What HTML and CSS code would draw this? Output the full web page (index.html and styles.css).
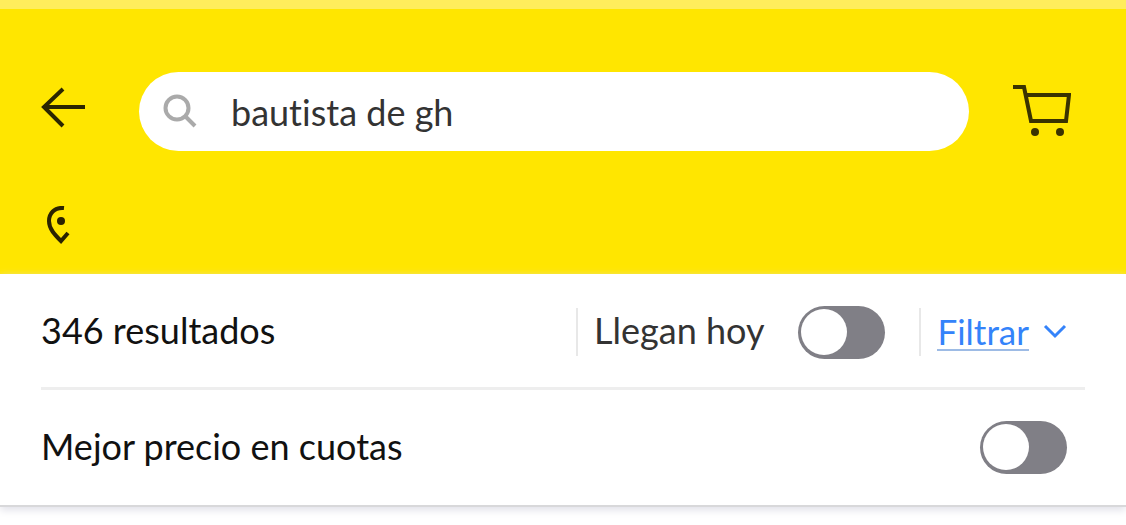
FILE: index.html
```html
<!DOCTYPE html>
<html lang="es">
<head>
    <meta charset="UTF-8">
    <meta name="viewport" content="width=device-width, initial-scale=1.0">
    <title>bautista de gh</title>
    <link rel="stylesheet" href="styles.css">
</head>
<body>

    <!-- Header -->
    <header class="header">
        <div class="search-bar">
            <button class="icon-button" type="button" aria-label="Volver">
                <svg width="46" height="50" viewBox="0 0 46 50" fill="none" stroke="#2b2600" stroke-width="4">
                    <path d="M23 2 4 20l19 19M4 20h41"/>
                </svg>
            </button>
            <form class="search" role="search">
                <svg width="34" height="36" viewBox="0 0 34 36" fill="none" stroke="#aaa" stroke-width="4">
                    <circle cx="14" cy="14" r="11.500"/>
                    <path d="M22 22 32 32"/>
                </svg>
                <input class="search-input" type="text" value="bautista de gh" aria-label="Buscar">
            </form>
            <button class="icon-button" type="button" aria-label="Carrito">
                <svg width="58" height="54" viewBox="0 0 58 54" fill="none" stroke="#3a3300" stroke-width="4">
                    <path d="M0 2h11l7 34h35l3-26H13"/>
                    <circle cx="22" cy="47" r="4" fill="#3a3300" stroke="none"/>
                    <circle cx="47" cy="47" r="4" fill="#3a3300" stroke="none"/>
                </svg>
            </button>
        </div>
        <div class="location">
            <svg width="26" height="38" viewBox="0 0 26 38" fill="none" stroke="#2b2300" stroke-width="4">
                <path d="M18 2C8 1 3 8 3 15c0 8 6 14 12 20l7-8"/>
                <circle cx="15" cy="15" r="4" fill="#2b2300" stroke="none"/>
            </svg>
        </div>
    </header>

    <!-- Filters -->
    <main class="filters">
        <div class="row row-results">
            <h1 class="title">346 resultados</h1>
            <div class="group">
                <label class="soft" for="today">Llegan hoy</label>
                <input class="switch" type="checkbox" role="switch" id="today">
            </div>
            <div class="group group-filter">
                <a class="filter-link" href="#">Filtrar</a>
                <svg width="24" height="16" viewBox="0 0 24 16" fill="none" stroke="#3483fa" stroke-width="3">
                    <path d="m2 2 10 10L22 2"/>
                </svg>
            </div>
        </div>
        <div class="row row-price">
            <label for="price">Mejor precio en cuotas</label>
            <input class="switch" type="checkbox" role="switch" id="price">
        </div>
    </main>

</body>
</html>
```
FILE: styles.css
```css
body {
    min-height: 100vh;
    margin: 0;
    background-color: #fff;
    color: #111;
    font-family: Lato, "Open Sans", sans-serif;
    font-size: 36px;
    font-variant-ligatures: none;
    line-height: 48px;
}
.header {
    background-color: #ffe600;
    border-top: 9px solid #ffed5c;
    padding: 63px 55px 30px 40px;
}
.search-bar {
    display: flex;
    align-items: center;
}
.icon-button {
    display: flex;
    padding: 0;
    border: 0;
    background: none;
    cursor: pointer;
}
.search {
    display: flex;
    flex: 1;
    align-items: center;
    gap: 34px;
    height: 79px;
    box-sizing: border-box;
    margin: 0 44px 0 53px;
    padding: 0 24px;
    border-radius: 40px;
    background-color: #fff;
}
.search-input {
    flex: 1;
    min-width: 0;
    padding: 0;
    border: 0;
    outline: 0;
    background: none;
    color: #333;
    font: inherit;
    font-variant-ligatures: none;
}
.location {
    display: flex;
    padding: 55px 0 0 6px;
}
.filters {
    border-bottom: 2px solid #d8d8da;
    box-shadow: 0 3px 8px #e0e0e8;
}
.row {
    display: flex;
    align-items: center;
    justify-content: space-between;
    height: 115px;
    margin: 0 41px;
    padding-right: 18px;
}
.row label,
.title {
    padding-bottom: 4px;
}
.row-results {
    height: 110px;
    padding-top: 3px;
    border-bottom: 3px solid #eee;
}
.title {
    flex: 1;
    margin: 0;
    font-size: 36px;
    font-weight: 400;
}
.group {
    display: flex;
    align-items: center;
    gap: 34px;
    height: 48px;
    margin-right: 34px;
    padding-left: 16px;
    border-left: 2px solid #e8e8e8;
}
.group-filter {
    gap: 14px;
    margin-right: 0;
}
.soft {
    color: #333;
}
.filter-link {
    border-bottom: 2px solid #9dbbe5;
    color: #3483fa;
    font-size: 35px;
    line-height: 36px;
    text-decoration: none;
}
.switch {
    appearance: none;
    width: 87px;
    height: 53px;
    margin: 0;
    border-radius: 27px;
    background: #807f86;
    cursor: pointer;
}
.switch::before {
    content: "";
    display: block;
    width: 46px;
    height: 46px;
    margin: 3px;
    border-radius: 50%;
    background: #fff;
}
.switch:checked {
    background: #3483fa;
}
.switch:checked::before {
    margin-left: 38px;
}
```
